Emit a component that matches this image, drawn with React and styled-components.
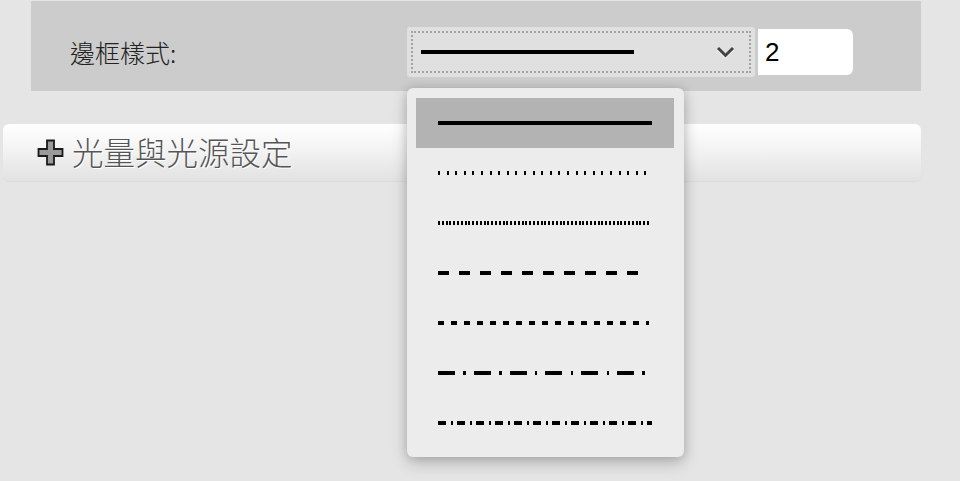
import React from 'react';
import styled, { createGlobalStyle } from 'styled-components';

const GlobalStyle = createGlobalStyle`
  html, body {
    margin: 0;
    padding: 0;
    background: #e5e5e5;
  }
  body {
    font-family: "Noto Sans CJK TC", "Liberation Sans", sans-serif;
    width: 960px;
    height: 481px;
    overflow: hidden;
  }
`;

const Page = styled.div`
  display: flex;
  flex-direction: column;
`;

const SettingsPanel = styled.div`
  margin: 1px 0 0 31px;
  width: 890px;
  height: 90px;
  box-sizing: border-box;
  padding-top: 26px;
  background: #cccccc;
`;

const Row = styled.div`
  display: flex;
  align-items: center;
  height: 50px;
`;

const Label = styled.span`
  width: 337px;
  padding-left: 39px;
  font-size: 25px;
  font-weight: 300;
  color: #222;
  line-height: 1;
`;

const SelectWrap = styled.div`
  position: relative;
`;

const SelectBox = styled.div`
  width: 348px;
  height: 50px;
  box-sizing: border-box;
  background: #e0e0e0;
  border-radius: 3px;
  outline: 2px dotted #a2a2a2;
  outline-offset: -6px;
  display: flex;
  align-items: center;
  padding: 0 20px 0 14px;
  justify-content: space-between;
`;

const Chevron = styled.svg`
  display: block;
  filter: drop-shadow(0 1px 0 #fff);
`;

const NumberInput = styled.input`
  margin-left: 3px;
  width: 95px;
  height: 46px;
  box-sizing: border-box;
  border: none;
  border-radius: 0 6px 6px 0;
  background: #fff;
  padding: 0 0 0 7px;
  font-family: "Liberation Sans", Arial, sans-serif;
  font-size: 26px;
  color: #000;
  outline: none;
`;

const Menu = styled.ul`
  position: absolute;
  top: 61px;
  left: 0;
  z-index: 5;
  width: 277px;
  margin: 0;
  padding: 10px 10px 9px 9px;
  box-sizing: border-box;
  list-style: none;
  background: #ececec;
  border-radius: 6px;
  box-shadow: 0 6px 16px rgba(0, 0, 0, 0.22), 0 0 10px rgba(0, 0, 0, 0.12);
`;

const Option = styled.li`
  height: 50px;
  display: flex;
  align-items: center;
  padding-left: 22px;
  background: ${p => (p.$active ? '#b3b3b3' : 'transparent')};
`;

const Accordion = styled.div`
  margin: 33px 0 0 3px;
  width: 918px;
  height: 57px;
  box-sizing: border-box;
  border-radius: 6px;
  background: linear-gradient(to bottom, #ffffff 0%, #f3f3f3 45%, #e2e2e2 100%);
  box-shadow: 0 1px 1px rgba(0, 0, 0, 0.05);
  display: flex;
  align-items: center;
  padding-left: 34px;
  gap: 8px;
`;

const Title = styled.span`
  font-size: 31.5px;
  font-weight: 300;
  color: #555;
  line-height: 1;
  text-shadow: 1px 1px 0 #fff;
  margin-top: -2px;
`;

const LineSample = ({ dash, length }) => (
  <svg width={length} height="6" style={{ display: 'block' }} shapeRendering="crispEdges">
    <line x1="0" y1="3" x2={length} y2="3" stroke="#000" strokeWidth="4" strokeDasharray={dash} />
  </svg>
);

const PlusIcon = () => (
  <svg width="27" height="27" viewBox="0 0 27 27" style={{ display: 'block' }}>
    <path
      d="M10 1.5h7v8.5h8.5v7h-8.5v8.5h-7v-8.5h-8.5v-7h8.5z"
      fill="#9a9a9a"
      stroke="#1a1a1a"
      strokeWidth="1.8"
      strokeLinejoin="miter"
    />
  </svg>
);

const styles = [
  { dash: undefined, length: 214 },
  { dash: '2 6.6', length: 208 },
  { dash: '2 1.8', length: 211 },
  { dash: '10.5 10.5', length: 204 },
  { dash: '6 7', length: 211 },
  { dash: '17 8.3 2.5 8', length: 210 },
  { dash: '8 5 2 4', length: 214 },
];

export default function App() {
  return (
    <Page>
      <GlobalStyle />
      <SettingsPanel>
        <Row>
          <Label>邊框樣式:</Label>
          <SelectWrap>
            <SelectBox>
              <LineSample length={213} />
              <Chevron width="19" height="12" viewBox="0 0 19 12">
                <polyline points="2,2 9.5,9.5 17,2" fill="none" stroke="#444" strokeWidth="3" />
              </Chevron>
            </SelectBox>
            <Menu>
              {styles.map((s, i) => (
                <Option key={i} $active={i === 0}>
                  <LineSample dash={s.dash} length={s.length} />
                </Option>
              ))}
            </Menu>
          </SelectWrap>
          <NumberInput defaultValue="2" />
        </Row>
      </SettingsPanel>
      <Accordion>
        <PlusIcon />
        <Title>光量與光源設定</Title>
      </Accordion>
    </Page>
  );
}
